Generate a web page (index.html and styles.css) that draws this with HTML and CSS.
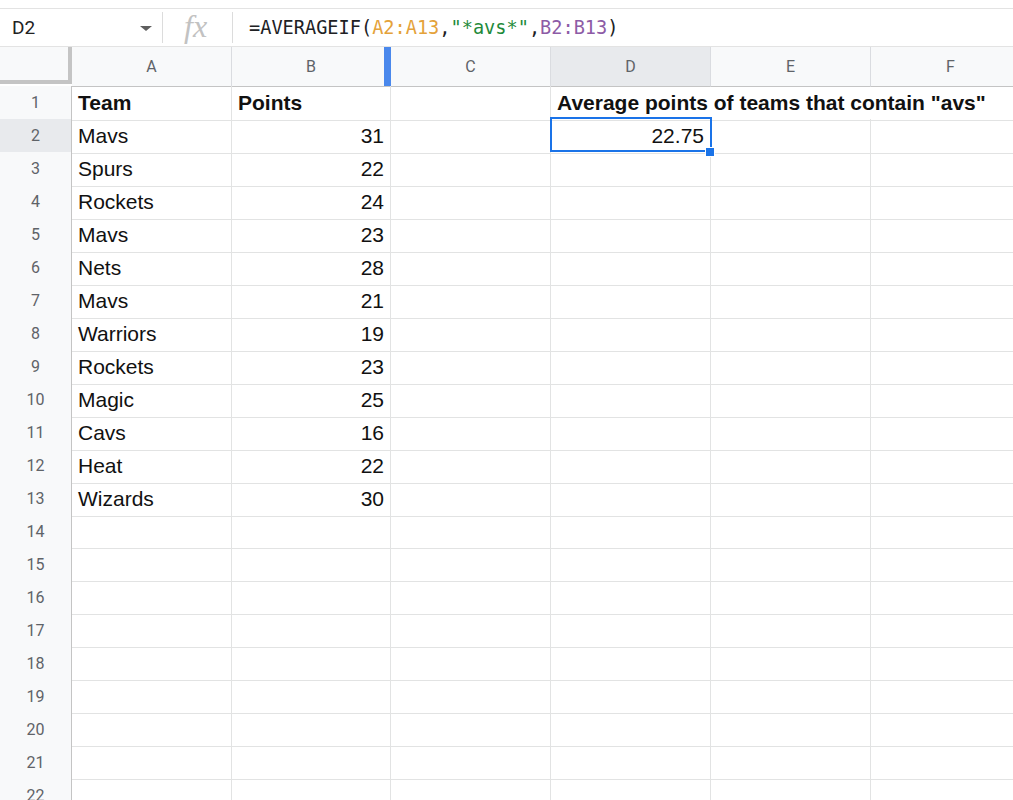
FILE: index.html
```html
<!DOCTYPE html>
<html lang="en">
<head>
    <meta charset="UTF-8">
    <meta name="viewport" content="width=device-width, initial-scale=1.0">
    <title>AVERAGEIF - Sheet</title>
    <link rel="stylesheet" href="styles.css">
</head>
<body>
    <div class="formula-bar">
        <div class="name-box">
            <span class="cell-ref">D2</span>
            <span class="caret"></span>
        </div>
        <div class="fx">fx</div>
        <div class="formula">=AVERAGEIF(<span class="ref-a">A2:A13</span>,<span class="str">"*avs*"</span>,<span class="ref-b">B2:B13</span>)</div>
    </div>

    <div class="sheet">
        <div class="row head">
            <div class="corner"></div>
            <div class="col">A</div>
            <div class="col col-hover">B</div>
            <div class="col">C</div>
            <div class="col selected">D</div>
            <div class="col">E</div>
            <div class="col">F</div>
        </div>

        <div class="row">
            <div class="num-head">1</div>
            <div class="cell bold">Team</div>
            <div class="cell bold">Points</div>
            <div class="cell"></div>
            <div class="cell bold wide">Average points of teams that contain "avs"</div>
        </div>
        <div class="row">
            <div class="num-head selected">2</div>
            <div class="cell">Mavs</div>
            <div class="cell num">31</div>
            <div class="cell"></div>
            <div class="cell num active">22.75<span class="handle"></span></div>
            <div class="cell"></div>
            <div class="cell"></div>
        </div>
        <div class="row">
            <div class="num-head">3</div>
            <div class="cell">Spurs</div>
            <div class="cell num">22</div>
            <div class="cell"></div><div class="cell"></div><div class="cell"></div><div class="cell"></div>
        </div>
        <div class="row">
            <div class="num-head">4</div>
            <div class="cell">Rockets</div>
            <div class="cell num">24</div>
            <div class="cell"></div><div class="cell"></div><div class="cell"></div><div class="cell"></div>
        </div>
        <div class="row">
            <div class="num-head">5</div>
            <div class="cell">Mavs</div>
            <div class="cell num">23</div>
            <div class="cell"></div><div class="cell"></div><div class="cell"></div><div class="cell"></div>
        </div>
        <div class="row">
            <div class="num-head">6</div>
            <div class="cell">Nets</div>
            <div class="cell num">28</div>
            <div class="cell"></div><div class="cell"></div><div class="cell"></div><div class="cell"></div>
        </div>
        <div class="row">
            <div class="num-head">7</div>
            <div class="cell">Mavs</div>
            <div class="cell num">21</div>
            <div class="cell"></div><div class="cell"></div><div class="cell"></div><div class="cell"></div>
        </div>
        <div class="row">
            <div class="num-head">8</div>
            <div class="cell">Warriors</div>
            <div class="cell num">19</div>
            <div class="cell"></div><div class="cell"></div><div class="cell"></div><div class="cell"></div>
        </div>
        <div class="row">
            <div class="num-head">9</div>
            <div class="cell">Rockets</div>
            <div class="cell num">23</div>
            <div class="cell"></div><div class="cell"></div><div class="cell"></div><div class="cell"></div>
        </div>
        <div class="row">
            <div class="num-head">10</div>
            <div class="cell">Magic</div>
            <div class="cell num">25</div>
            <div class="cell"></div><div class="cell"></div><div class="cell"></div><div class="cell"></div>
        </div>
        <div class="row">
            <div class="num-head">11</div>
            <div class="cell">Cavs</div>
            <div class="cell num">16</div>
            <div class="cell"></div><div class="cell"></div><div class="cell"></div><div class="cell"></div>
        </div>
        <div class="row">
            <div class="num-head">12</div>
            <div class="cell">Heat</div>
            <div class="cell num">22</div>
            <div class="cell"></div><div class="cell"></div><div class="cell"></div><div class="cell"></div>
        </div>
        <div class="row">
            <div class="num-head">13</div>
            <div class="cell">Wizards</div>
            <div class="cell num">30</div>
            <div class="cell"></div><div class="cell"></div><div class="cell"></div><div class="cell"></div>
        </div>
        <div class="row">
            <div class="num-head">14</div>
            <div class="cell"></div><div class="cell"></div><div class="cell"></div><div class="cell"></div><div class="cell"></div><div class="cell"></div>
        </div>
        <div class="row">
            <div class="num-head">15</div>
            <div class="cell"></div><div class="cell"></div><div class="cell"></div><div class="cell"></div><div class="cell"></div><div class="cell"></div>
        </div>
        <div class="row">
            <div class="num-head">16</div>
            <div class="cell"></div><div class="cell"></div><div class="cell"></div><div class="cell"></div><div class="cell"></div><div class="cell"></div>
        </div>
        <div class="row">
            <div class="num-head">17</div>
            <div class="cell"></div><div class="cell"></div><div class="cell"></div><div class="cell"></div><div class="cell"></div><div class="cell"></div>
        </div>
        <div class="row">
            <div class="num-head">18</div>
            <div class="cell"></div><div class="cell"></div><div class="cell"></div><div class="cell"></div><div class="cell"></div><div class="cell"></div>
        </div>
        <div class="row">
            <div class="num-head">19</div>
            <div class="cell"></div><div class="cell"></div><div class="cell"></div><div class="cell"></div><div class="cell"></div><div class="cell"></div>
        </div>
        <div class="row">
            <div class="num-head">20</div>
            <div class="cell"></div><div class="cell"></div><div class="cell"></div><div class="cell"></div><div class="cell"></div><div class="cell"></div>
        </div>
        <div class="row">
            <div class="num-head">21</div>
            <div class="cell"></div><div class="cell"></div><div class="cell"></div><div class="cell"></div><div class="cell"></div><div class="cell"></div>
        </div>
        <div class="row">
            <div class="num-head">22</div>
            <div class="cell"></div><div class="cell"></div><div class="cell"></div><div class="cell"></div><div class="cell"></div><div class="cell"></div>
        </div>
    </div>
</body>
</html>
```

FILE: styles.css
```css
body {
    margin: 0;
    overflow: hidden;
    background: #fff;
    font-family: "Liberation Sans", Arial, sans-serif;
}
.formula-bar {
    display: flex;
    align-items: center;
    margin-top: 8px;
    height: 39px;
    box-sizing: border-box;
    border-top: 1px solid #e3e3e3;
    border-bottom: 1px solid #e3e3e3;
}
.name-box {
    display: flex;
    align-items: center;
    justify-content: space-between;
    width: 163px;
    box-sizing: border-box;
    padding: 0 10px 0 12px;
    height: 31px;
    border-right: 1px solid #dcdcdc;
}
.cell-ref {
    font-family: Roboto, "Liberation Sans", sans-serif;
    font-size: 19px;
    color: #222;
}
.caret {
    width: 0;
    height: 0;
    border-left: 6px solid transparent;
    border-right: 6px solid transparent;
    border-top: 5px solid #5f5f5f;
    margin-top: 2px;
}
.fx {
    width: 70px;
    height: 31px;
    box-sizing: border-box;
    border-right: 1px solid #dcdcdc;
    font-family: "Liberation Serif", serif;
    font-style: italic;
    font-size: 32px;
    line-height: 28px;
    color: #c2c2c2;
    padding-left: 21px;
}
.formula {
    padding-left: 16px;
    font-family: "DejaVu Sans Mono", monospace;
    font-size: 18.6px;
    color: #202124;
    white-space: nowrap;
}
.ref-a {
    color: #e4a23a;
}
.str {
    color: #1e8a3a;
}
.ref-b {
    color: #8d5ba6;
}
.sheet {
    width: 1031px;
}
.row {
    display: grid;
    grid-template-columns: 72px 160px 159px 160px 160px 160px 160px;
    height: 33px;
}
.row.head {
    height: 39px;
}
.corner {
    background: #f8f9fa;
    border-right: 4px solid #c4c4c4;
    border-bottom: 4px solid #c4c4c4;
    margin-bottom: 3px;
}
.col {
    position: relative;
    background: #f8f9fa;
    border-right: 1px solid #dadce0;
    border-bottom: 1px solid #c4c4c4;
    font-family: Roboto, "Liberation Sans", sans-serif;
    font-size: 16px;
    color: #5f6368;
    text-align: center;
    line-height: 39px;
}
.col.selected, .num-head.selected {
    background: #e8eaed;
}
.col-hover::after {
    content: "";
    position: absolute;
    top: 0;
    right: -1px;
    width: 7px;
    height: 39px;
    background: #4a88ec;
}
.num-head {
    background: #f8f9fa;
    border-right: 1px solid #c4c4c4;
    border-bottom: 1px solid #e2e3e3;
    font-family: Roboto, "Liberation Sans", sans-serif;
    font-size: 16px;
    color: #5f6368;
    text-align: center;
    line-height: 33px;
}
.cell {
    position: relative;
    border-right: 1px solid #e2e3e3;
    border-bottom: 1px solid #e2e3e3;
    padding: 0 6px;
    font-size: 21px;
    line-height: 34px;
    color: #111;
    white-space: nowrap;
}
.bold {
    font-weight: bold;
}
.num {
    text-align: right;
}
.wide {
    grid-column: span 3;
}
.active::after {
    content: "";
    position: absolute;
    top: -2px;
    left: -1px;
    width: 162px;
    height: 35px;
    box-sizing: border-box;
    border: 2px solid #1a73e8;
}
.handle {
    position: absolute;
    right: -5px;
    bottom: -4px;
    width: 8px;
    height: 8px;
    background: #1a73e8;
    border: 1px solid #fff;
    z-index: 2;
}
```
